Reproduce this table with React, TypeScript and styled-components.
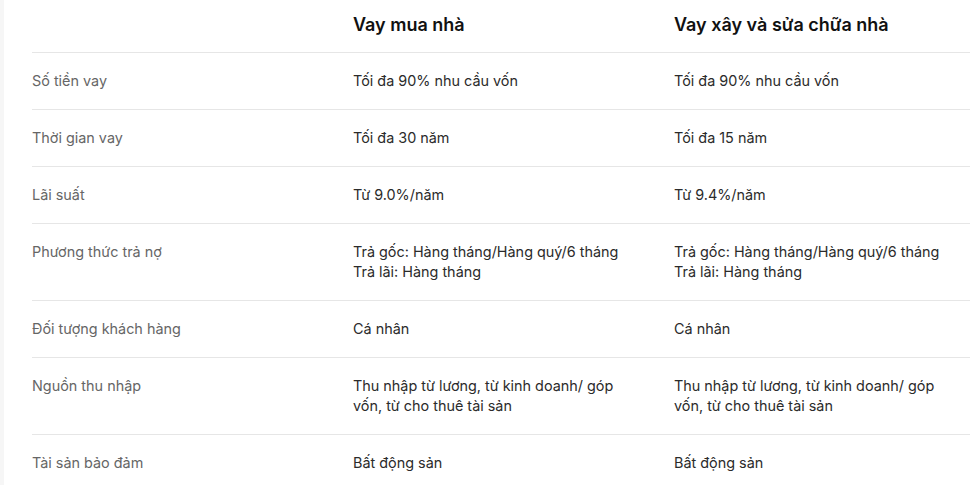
import React from 'react';
import styled, { createGlobalStyle } from 'styled-components';

const GlobalStyle = createGlobalStyle`
  html, body {
    margin: 0;
    padding: 0;
    background: #ffffff;
    font-family: Inter, "Noto Sans", "Liberation Sans", sans-serif;
    overflow: hidden;
  }
`;

const Page = styled.div`
  width: 970px;
  height: 485px;
  overflow: hidden;
  box-sizing: border-box;
  border-left: 4px solid #f6f6f6;
  padding-left: 28px;
`;

const Table = styled.div`
  display: grid;
  grid-template-columns: 321px 321px 1fr;
  width: 1000px;
`;

const HeadCell = styled.div`
  font-size: 18px;
  font-weight: 600;
  line-height: 24px;
  color: #111111;
  padding: 13px 0 15px;
  border-bottom: 1px solid #e6e6e6;
`;

const Cell = styled.div<{ $label?: boolean }>`
  font-size: 14.4px;
  line-height: 20px;
  color: ${(p) => (p.$label ? '#666666' : '#2b2b2b')};
  padding: 18px 20px 18px 0;
  border-bottom: 1px solid #e6e6e6;
  &:nth-last-child(-n + 3) {
    border-bottom: none;
  }
`;

const rows: [string, string, string][] = [
  ['Số tiền vay', 'Tối đa 90% nhu cầu vốn', 'Tối đa 90% nhu cầu vốn'],
  ['Thời gian vay', 'Tối đa 30 năm', 'Tối đa 15 năm'],
  ['Lãi suất', 'Từ 9.0%/năm', 'Từ 9.4%/năm'],
  [
    'Phương thức trả nợ',
    'Trả gốc: Hàng tháng/Hàng quý/6 tháng\nTrả lãi: Hàng tháng',
    'Trả gốc: Hàng tháng/Hàng quý/6 tháng\nTrả lãi: Hàng tháng',
  ],
  ['Đối tượng khách hàng', 'Cá nhân', 'Cá nhân'],
  [
    'Nguồn thu nhập',
    'Thu nhập từ lương, từ kinh doanh/ góp\nvốn, từ cho thuê tài sản',
    'Thu nhập từ lương, từ kinh doanh/ góp\nvốn, từ cho thuê tài sản',
  ],
  ['Tài sản bảo đảm', 'Bất động sản', 'Bất động sản'],
];

function Lines({ text }: { text: string }) {
  const parts = text.split('\n');
  return (
    <>
      {parts.map((t, i) => (
        <React.Fragment key={i}>
          {t}
          {i < parts.length - 1 && <br />}
        </React.Fragment>
      ))}
    </>
  );
}

export default function App() {
  return (
    <>
      <GlobalStyle />
      <Page>
        <Table>
          <HeadCell />
          <HeadCell>Vay mua nhà</HeadCell>
          <HeadCell>Vay xây và sửa chữa nhà</HeadCell>
          {rows.map((r) => (
            <React.Fragment key={r[0]}>
              <Cell $label>{r[0]}</Cell>
              <Cell><Lines text={r[1]} /></Cell>
              <Cell><Lines text={r[2]} /></Cell>
            </React.Fragment>
          ))}
        </Table>
      </Page>
    </>
  );
}
